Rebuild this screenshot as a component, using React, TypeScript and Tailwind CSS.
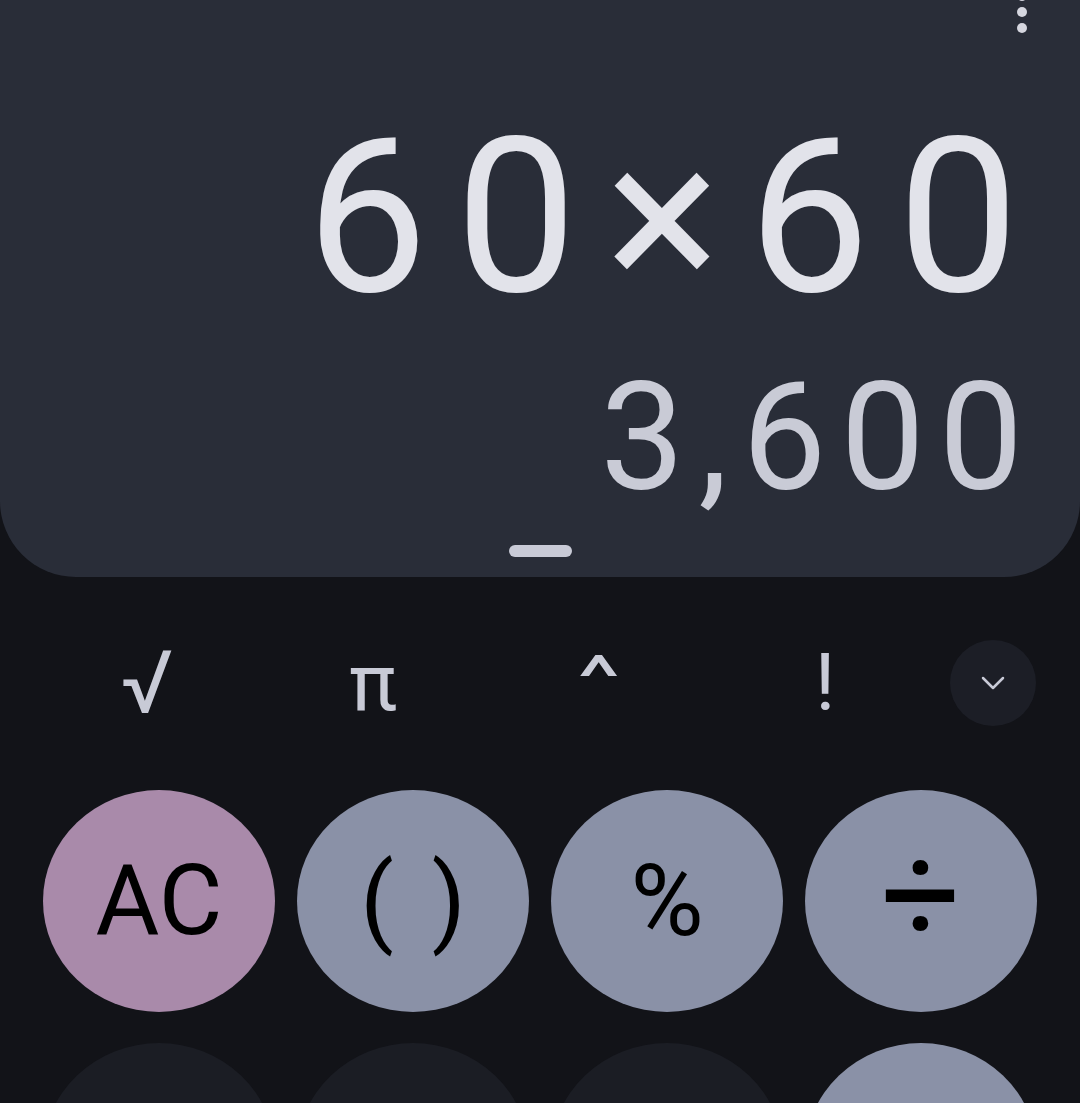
import { ChevronDown } from 'lucide-react';

const sciKeys = ['√', 'π', '^', '!'];

const light = 'bg-[#8a91a7] text-black';
const dark = 'bg-[#1b1d24] text-[#e2e3ea]';

export default function App() {
  return (
    <div className="h-[1103px] overflow-hidden bg-[#121318] font-['Roboto',sans-serif]">
      {/* display panel */}
      <section className="flex h-[577px] flex-col rounded-b-[76px] bg-[#292d38]">
        <div className="flex justify-end pr-[52px]">
          <svg width="12" height="34" viewBox="0 0 12 34" className="block">
            <circle cx="6" cy="-4" r="5" fill="#d5d6df" />
            <circle cx="6" cy="12" r="5" fill="#d5d6df" />
            <circle cx="6" cy="28" r="5" fill="#d5d6df" />
          </svg>
        </div>
        <div className="mt-[76px] pr-[33px] text-right text-[216px] leading-none tracking-[28px] text-[#e2e3ea]">
          60×60
        </div>
        <div className="mt-[37px] pr-[43px] text-right text-[150px] leading-none tracking-[14px] text-[#c9cbd6]">
          3,600
        </div>
        <div className="mt-[32px] flex justify-center">
          <div className="h-[12px] w-[63px] rounded-full bg-[#c8cad6]" />
        </div>
      </section>

      {/* scientific row */}
      <div className="mt-[63px] flex items-center px-[34px]">
        <div className="grid grid-cols-[repeat(4,226px)]">
          {sciKeys.map((k) => (
            <div
              key={k}
              className={`flex h-[86px] items-center justify-center leading-none text-[#c8cad6] ${
                k === '√' ? 'text-[88px]' : 'text-[80px]'
              }`}
            >
              {k === '^' ? (
                <span className="inline-block origin-[50%_25%] scale-x-[1.3] scale-y-[0.73]">^</span>
              ) : (
                k
              )}
            </div>
          ))}
        </div>
        <button className="ml-[12px] flex h-[86px] w-[86px] items-center justify-center rounded-full bg-[#1c1e26] text-[#c8cad6]">
          <ChevronDown size={40} strokeWidth={1.5} />
        </button>
      </div>

      {/* keypad */}
      <div className="mt-[64px] grid grid-cols-[repeat(4,232px)] gap-x-[22px] gap-y-[31px] px-[43px]">
        <button className="flex h-[222px] items-center justify-center rounded-[50%] bg-[#a98aaa] text-[98px] leading-none text-black">
          AC
        </button>
        <button className={`flex h-[222px] items-center justify-center gap-[38px] rounded-[50%] text-[98px] leading-none ${light}`}>
          <span>(</span>
          <span>)</span>
        </button>
        <button className={`flex h-[222px] items-center justify-center rounded-[50%] text-[100px] leading-none ${light}`}>
          %
        </button>
        <button className={`flex h-[222px] items-center justify-center rounded-[50%] pb-[12px] text-[140px] leading-none ${light}`}>
          ÷
        </button>
        <button aria-label="7" className={`h-[222px] rounded-[50%] ${dark}`} />
        <button aria-label="8" className={`h-[222px] rounded-[50%] ${dark}`} />
        <button aria-label="9" className={`h-[222px] rounded-[50%] ${dark}`} />
        <button aria-label="multiply" className={`h-[222px] rounded-[50%] ${light}`} />
      </div>
    </div>
  );
}
